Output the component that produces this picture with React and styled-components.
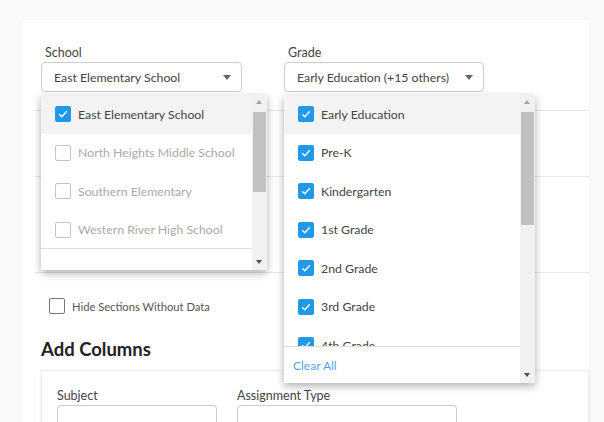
import styled, { createGlobalStyle } from "styled-components";

const GlobalStyle = createGlobalStyle`
  html, body {
    margin: 0;
    padding: 0;
    background: #fafafa;
    font-family: Lato, "Noto Sans", sans-serif;
    color: #444;
    overflow: hidden;
  }
`;

const Page = styled.div`
  padding: 20px 15px 0 21px;
  height: 422px;
  box-sizing: border-box;
`;

const Card = styled.div`
  position: relative;
  background: #fff;
  box-shadow: 0 0 2px rgba(0, 0, 0, 0.06);
  padding: 24px 0 0 20px;
  height: 100%;
  box-sizing: border-box;
`;

const FilterRow = styled.div`
  display: flex;
  gap: 42px;
`;

const Field = styled.div`
  display: flex;
  flex-direction: column;
  width: ${(p) => p.width}px;
`;

const Label = styled.div`
  font-size: 12.5px;
  line-height: 17px;
  margin: 0 0 1px ${(p) => (p.inset ? 4 : 0)}px;
  color: #444;
`;

const SelectBox = styled.div`
  height: 30px;
  box-sizing: border-box;
  border: 1px solid #ccc;
  border-radius: 4px;
  display: flex;
  align-items: center;
  justify-content: space-between;
  padding: 0 10px 0 12px;
  font-size: 12.3px;
  color: #444;
`;

const Caret = styled.span`
  width: 0;
  height: 0;
  border-left: 4px solid transparent;
  border-right: 4px solid transparent;
  border-top: 5px solid #666;
`;

const Sections = styled.div`
  margin-left: -6px;
`;

const SectionRow = styled.div`
  height: ${(p) => p.h}px;
  border-bottom: 1px solid #e8e8e8;
`;

const HideRow = styled.label`
  display: flex;
  align-items: center;
  gap: 7px;
  margin: 25px 0 0 8px;
  font-size: 11.2px;
  color: #555;
`;

const Heading = styled.h2`
  margin: 24px 0 0;
  font-size: 18.5px;
  line-height: 22px;
  font-weight: 700;
  color: #222;
`;

const SubCard = styled.div`
  margin-top: 10px;
  border: 1px solid #ececec;
  box-shadow: 0 1px 4px rgba(0, 0, 0, 0.06);
  padding: 16px 15px;
  display: flex;
  gap: 20px;
`;

const Input = styled.div`
  height: 30px;
  border: 1px solid #ccc;
  border-radius: 4px;
`;

const Dropdown = styled.div`
  position: absolute;
  left: ${(p) => p.left}px;
  top: 75px;
  width: ${(p) => p.width}px;
  height: ${(p) => p.height}px;
  background: #fff;
  box-shadow: 0 3px 8px rgba(0, 0, 0, 0.32);
  display: flex;
  z-index: 5;
`;

const MenuMain = styled.div`
  flex: 1;
  display: flex;
  flex-direction: column;
  min-width: 0;
`;

const List = styled.div`
  flex: 1;
  overflow: hidden;
`;

const Item = styled.div`
  height: 38.5px;
  display: flex;
  align-items: center;
  gap: 7px;
  padding-left: 14px;
  font-size: 12.3px;
  white-space: nowrap;
  background: ${(p) => (p.active ? "#f3f3f3" : "#fff")};
  color: ${(p) => (p.disabled ? "#aaa" : "#444")};
`;

const Footer = styled.div`
  height: ${(p) => p.h}px;
  border-top: 1px solid #ddd;
  display: flex;
  align-items: center;
  padding-left: 9px;
`;

const ClearAll = styled.span`
  font-size: 12px;
  color: #5a9fe6;
`;

const Box = styled.span`
  width: 16px;
  height: 16px;
  box-sizing: border-box;
  border-radius: 2px;
  flex: none;
  display: flex;
  align-items: center;
  justify-content: center;
  background: ${(p) => (p.checked ? "#2199e8" : "#fff")};
  border: 1px solid ${(p) => (p.checked ? "#2199e8" : p.dark ? "#777" : "#c4c4c4")};
`;

const Track = styled.div`
  width: 15px;
  background: #f1f1f1;
  position: relative;
  flex: none;
`;

const Thumb = styled.div`
  position: absolute;
  left: 1px;
  right: 1px;
  top: ${(p) => p.top}px;
  height: ${(p) => p.h}px;
  background: #c1c1c1;
`;

const Arrow = styled.span`
  position: absolute;
  left: 4px;
  width: 0;
  height: 0;
  border-left: 3.5px solid transparent;
  border-right: 3.5px solid transparent;
  ${(p) =>
    p.up
      ? `top: 5px; border-bottom: 4px solid #a3a3a3;`
      : `bottom: 6px; border-top: 4px solid #505050;`}
`;

const Check = ({ checked, dark }) => (
  <Box checked={checked} dark={dark}>
    {checked && (
      <svg width="12" height="12" viewBox="0 0 12 12">
        <polyline points="2.2,6.3 4.8,8.8 9.8,3.3" fill="none" stroke="#fff" strokeWidth="1.3" />
      </svg>
    )}
  </Box>
);

const Scrollbar = ({ thumbH }) => (
  <Track>
    <Arrow up />
    <Thumb top={17} h={thumbH} />
    <Arrow />
  </Track>
);

const schools = [
  { name: "East Elementary School", checked: true },
  { name: "North Heights Middle School", disabled: true },
  { name: "Southern Elementary", disabled: true },
  { name: "Western River High School", disabled: true },
];

const grades = ["Early Education", "Pre-K", "Kindergarten", "1st Grade", "2nd Grade", "3rd Grade", "4th Grade"];

export default function App() {
  return (
    <>
      <GlobalStyle />
      <Page>
        <Card>
          <FilterRow>
            <Field width={201}>
              <Label inset>School</Label>
              <SelectBox>
                East Elementary School <Caret />
              </SelectBox>
            </Field>
            <Field width={200}>
              <Label inset>Grade</Label>
              <SelectBox>
                Early Education (+15 others) <Caret />
              </SelectBox>
            </Field>
          </FilterRow>

          <Sections>
            <SectionRow h={18} />
            <SectionRow h={65} />
            <SectionRow h={95} />
          </Sections>

          <HideRow>
            <Check dark />
            Hide Sections Without Data
          </HideRow>

          <Heading>Add Columns</Heading>
          <SubCard>
            <Field width={160}>
              <Label>Subject</Label>
              <Input />
            </Field>
            <Field width={220}>
              <Label>Assignment Type</Label>
              <Input />
            </Field>
          </SubCard>

          <Dropdown left={20} width={226} height={175}>
            <MenuMain>
              <List>
                {schools.map((s, i) => (
                  <Item key={s.name} active={i === 0} disabled={s.disabled}>
                    <Check checked={s.checked} />
                    {s.name}
                  </Item>
                ))}
              </List>
              <Footer h={21} />
            </MenuMain>
            <Scrollbar thumbH={80} />
          </Dropdown>

          <Dropdown left={263} width={251} height={288}>
            <MenuMain>
              <List>
                {grades.map((g, i) => (
                  <Item key={g} active={i === 0}>
                    <Check checked />
                    {g}
                  </Item>
                ))}
              </List>
              <Footer h={36}>
                <ClearAll>Clear All</ClearAll>
              </Footer>
            </MenuMain>
            <Scrollbar thumbH={113} />
          </Dropdown>
        </Card>
      </Page>
    </>
  );
}
